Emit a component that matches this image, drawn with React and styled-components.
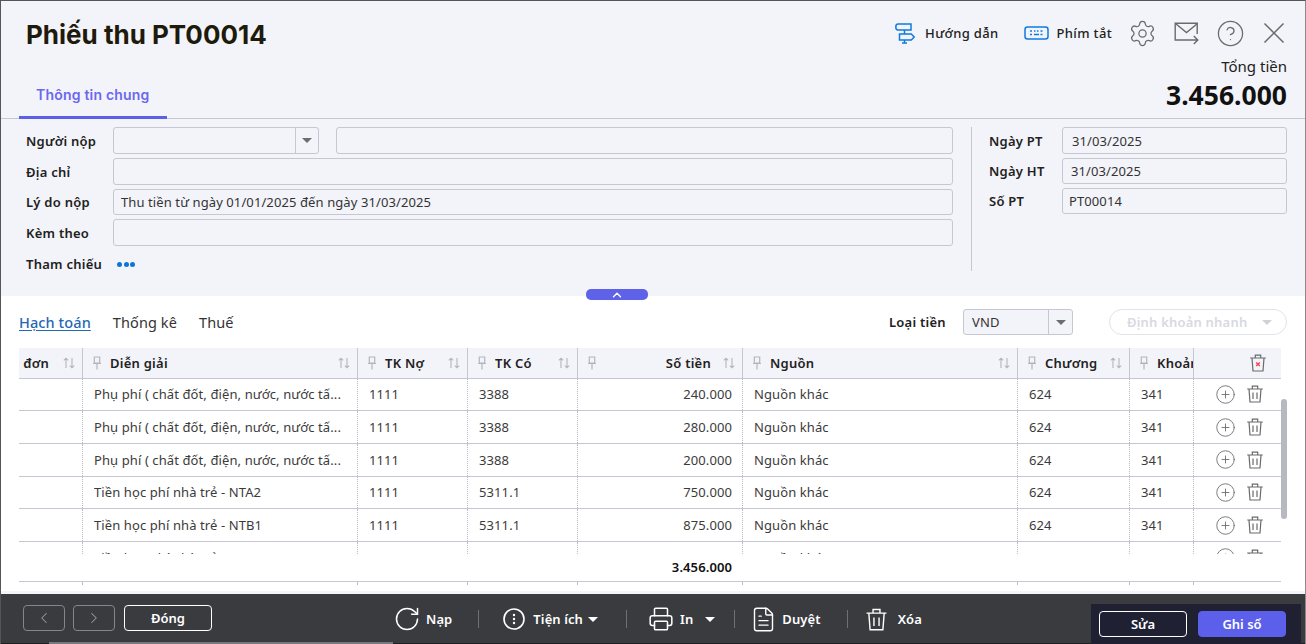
import React from 'react';
import styled, { createGlobalStyle } from 'styled-components';
import {
  ChevronLeft,
  ChevronRight,
  ChevronUp,
  CirclePlus,
  CircleHelp,
  FileText,
  Printer,
  RotateCw,
  Settings,
} from 'lucide-react';

const GlobalStyle = createGlobalStyle`
  html, body { margin: 0; padding: 0; background: #fff; }
  * { box-sizing: border-box; }
  body {
    font-family: "Noto Sans", "Liberation Sans", sans-serif;
    color: #212121;
    letter-spacing: 0.1px;
  }
`;

// main window
const Shell = styled.div`
  position: relative;
  width: 1306px;
  height: 644px;
  overflow: hidden;
  display: flex;
  flex-direction: column;
  background: #fff;
  border-top: 1px solid #555;
  border-left: 1px solid #555;
  border-right: 1px solid #8a8a8a;
`;

// top section
const Header = styled.header`
  height: 118px;
  flex: none;
  display: flex;
  justify-content: space-between;
  background: #f3f4f9;
  border-bottom: 1px solid #c6c7d0;
`;
const HeaderLeft = styled.div`
  padding-left: 18px;
  display: flex;
  flex-direction: column;
  justify-content: space-between;
`;
const Title = styled.h1`
  margin: 17px 0 0 7px;
  font-family: Inter, "Noto Sans", sans-serif;
  font-size: 26px;
  line-height: 34px;
  font-weight: 700;
  letter-spacing: 0;
  color: #1e1a0c;
`;
const MainTab = styled.div`
  width: 148px;
  height: 37px;
  margin-bottom: -1px;
  padding: 3px 0 0 17px;
  font-family: Inter, "Noto Sans", sans-serif;
  font-size: 14px;
  line-height: 20px;
  font-weight: 600;
  letter-spacing: 0.2px;
  color: #6a67f0;
  border-bottom: 3px solid #5c5fea;
`;
const HeaderRight = styled.div`
  padding: 18px 18px 0 0;
  display: flex;
  flex-direction: column;
  align-items: flex-end;
`;
const Toolbar = styled.div`
  height: 28px;
  display: flex;
  align-items: center;
  color: #6a6a6a;
`;
const ToolLink = styled.div`
  display: flex;
  align-items: center;
  gap: ${(p) => p.$gap}px;
  margin-right: ${(p) => p.$mr}px;
  font-size: 13px;
  font-weight: 500;
  letter-spacing: 0.35px;
  color: #212121;
`;
const ToolIcon = styled.div`
  display: flex;
  margin-left: ${(p) => p.$ml || 0}px;
  margin-right: ${(p) => p.$mr || 0}px;
`;
const TotalLabel = styled.div`
  margin-top: 9px;
  font-size: 15px;
  line-height: 20px;
  letter-spacing: 0;
  color: #212121;
`;
const TotalValue = styled.div`
  margin-top: 2px;
  font-size: 26.5px;
  line-height: 34px;
  font-weight: 700;
  letter-spacing: 0;
  color: #111;
`;

// form section
const FormPanel = styled.section`
  height: 177px;
  flex: none;
  display: flex;
  padding: 8px 18px 0 25px;
  background: #f3f4f9;
`;
const FormLeft = styled.div`
  width: 927px;
  display: flex;
  flex-direction: column;
  gap: 4px;
`;
const FormRight = styled.div`
  width: 316px;
  height: 144px;
  margin-left: 18px;
  padding-left: 17px;
  border-left: 1px solid #c6c7d0;
  display: flex;
  flex-direction: column;
  gap: 4px;
`;
const FormRow = styled.div`
  height: ${(p) => p.$h || 27}px;
  display: flex;
  align-items: center;
`;
const Label = styled.label`
  width: ${(p) => p.$w}px;
  flex: none;
  font-size: 13px;
  font-weight: 600;
  letter-spacing: 0.25px;
  color: #212121;
`;
const Field = styled.div`
  flex: ${(p) => (p.$w ? 'none' : 1)};
  width: ${(p) => (p.$w ? `${p.$w}px` : 'auto')};
  height: 100%;
  margin-left: ${(p) => p.$ml || 0}px;
  padding-left: ${(p) => p.$pl || 7}px;
  display: flex;
  align-items: center;
  font-size: 13px;
  color: #333;
  background: #f3f4f9;
  border: 1px solid #c6c7d0;
  border-radius: 3px;
`;
const ComboText = styled.span`
  flex: 1;
`;
const ComboArrow = styled.span`
  width: ${(p) => p.$w}px;
  height: 100%;
  flex: none;
  display: flex;
  align-items: center;
  justify-content: center;
  border-left: 1px solid #c6c7d0;
`;
const Caret = styled.span`
  width: 0;
  height: 0;
  margin-left: ${(p) => p.$ml || 0}px;
  border-left: ${(p) => p.$s}px solid transparent;
  border-right: ${(p) => p.$s}px solid transparent;
  border-top: ${(p) => p.$s}px solid ${(p) => p.$c || '#6d6d6d'};
`;
const Dots = styled.div`
  margin: 2px 0 0 4px;
  display: flex;
  gap: 1.5px;
  span {
    width: 5px;
    height: 5px;
    border-radius: 50%;
    background: #0f74d8;
  }
`;
const CollapseHandle = styled.button`
  position: absolute;
  left: 585px;
  top: 288px;
  width: 62px;
  height: 11px;
  padding: 0;
  border: 0;
  border-radius: 5px;
  background: #5d62e8;
  color: #fff;
  display: flex;
  align-items: center;
  justify-content: center;
`;

// detail section
const Detail = styled.section`
  flex: 1;
  min-height: 0;
  padding: 13px 0 0 18px;
  display: flex;
  flex-direction: column;
`;
const DetailBar = styled.div`
  height: 26px;
  padding-right: 18px;
  display: flex;
  align-items: center;
`;
const SubTab = styled.span`
  margin-right: 22px;
  font-size: 14.5px;
  font-weight: ${(p) => (p.$active ? 500 : 400)};
  color: ${(p) => (p.$active ? '#1f68b3' : '#333')};
  text-decoration: ${(p) => (p.$active ? 'underline' : 'none')};
  text-underline-offset: 2px;
`;
const CurrencyGroup = styled.div`
  margin-left: auto;
  height: 100%;
  display: flex;
  align-items: center;
`;
const QuickButton = styled.div`
  width: 178px;
  height: 100%;
  margin-left: 36px;
  padding: 0 14px 0 17px;
  display: flex;
  align-items: center;
  justify-content: space-between;
  font-size: 13px;
  font-weight: 600;
  letter-spacing: 0.2px;
  color: #d8d9df;
  border: 1px solid #e2e3e9;
  border-radius: 13px;
`;

const TableWrap = styled.div`
  width: 1262px;
  margin-top: 13px;
`;
const Grid = styled.div`
  display: grid;
  grid-template-columns: 63px 275px 110px 110px 165px 275px 112px 64px 88px;
  height: ${(p) => p.$h}px;
  border-bottom: ${(p) => (p.$flat ? 0 : 1)}px solid #c6c7d0;
`;
const HeadCell = styled.div`
  position: relative;
  min-width: 0;
  overflow: hidden;
  display: flex;
  align-items: center;
  justify-content: ${(p) => (p.$clip ? 'flex-end' : 'flex-start')};
  padding: ${(p) => (p.$clip ? '1px 33px 0 0' : '1px 0 0 9px')};
  background: #f3f4f9;
  border-left: ${(p) => (p.$first ? 0 : 1)}px solid #c6c7d0;
  font-size: 13px;
  font-weight: 600;
  letter-spacing: 0.25px;
  white-space: nowrap;
  color: #212121;
  svg {
    flex: none;
  }
`;
const HeadLabel = styled.span`
  flex: ${(p) => (p.$right ? 1 : 'none')};
  text-align: ${(p) => (p.$right ? 'right' : 'left')};
  margin-left: ${(p) => (p.$clip ? 0 : 8)}px;
  padding-right: ${(p) => (p.$right ? 31 : 0)}px;
`;
const SortMark = styled.span`
  position: absolute;
  right: 7px;
  top: 9px;
  display: flex;
  background: #f3f4f9;
`;
const DelAllMark = styled.span`
  margin-left: 46px;
  display: flex;
`;
const Scroller = styled.div`
  height: 175px;
  overflow: hidden;
`;
const Cell = styled.div`
  min-width: 0;
  display: flex;
  align-items: center;
  justify-content: ${(p) => (p.$right ? 'flex-end' : 'flex-start')};
  padding: 0 ${(p) => (p.$right ? 10 : 0)}px 0 11px;
  border-left: ${(p) => (p.$first ? 0 : 1)}px dotted #b9bac4;
  font-size: 13px;
  color: #3b3b3b;
  white-space: nowrap;
`;
const Ellipsis = styled.span`
  overflow: hidden;
  text-overflow: ellipsis;
`;
const ActionCell = styled(Cell)`
  padding-left: 21px;
  gap: 10px;
  color: #6a6a6a;
  svg {
    flex: none;
  }
`;
const SumRow = styled.div`
  height: 28px;
  padding-right: 549px;
  display: flex;
  align-items: center;
  justify-content: flex-end;
  font-size: 13px;
  font-weight: 600;
  color: #111;
  border-bottom: 1px solid #c6c7d0;
`;
const Tick = styled.div`
  border-left: ${(p) => (p.$first ? 0 : 1)}px dotted #b9bac4;
`;
const VScroll = styled.div`
  position: absolute;
  left: 1280px;
  top: 398px;
  width: 6px;
  height: 120px;
  border-radius: 3px;
  background: #b7b9c0;
`;

// footer section
const Band = styled.div`
  height: 3px;
  flex: none;
  margin-top: auto;
  background: #f3f4f9;
`;
const Footer = styled.footer`
  height: 50px;
  flex: none;
  display: flex;
  justify-content: space-between;
  margin: 0 -1px;
  background: #3a3b3f;
  border-bottom: 1px solid #1f1f22;
  color: #fff;
`;
const FooterLeft = styled.div`
  width: 392.5px;
  padding: 11px 0 0 23px;
  display: flex;
  gap: 8px;
`;
const NavButton = styled.button`
  width: 42px;
  height: 26px;
  padding: 0;
  display: flex;
  align-items: center;
  justify-content: center;
  background: transparent;
  border: 1px solid #85868b;
  border-radius: 4px;
  color: #9a9ba0;
`;
const CloseButton = styled.button`
  width: 88px;
  height: 26px;
  margin-left: 1px;
  font-family: inherit;
  font-size: 13px;
  font-weight: 600;
  color: #fff;
  background: transparent;
  border: 1px solid #fff;
  border-radius: 4px;
`;
const Actions = styled.div`
  flex: 1;
  height: 100%;
  padding-top: 1px;
  display: flex;
  align-items: center;
`;
const Action = styled.div`
  display: flex;
  align-items: center;
  gap: ${(p) => p.$gap}px;
  font-size: 13px;
  font-weight: 600;
  svg {
    flex: none;
  }
`;
const Sep = styled.span`
  width: 1px;
  height: 18px;
  margin: 0 ${(p) => p.$r}px 0 ${(p) => p.$l}px;
  background: #6f7075;
`;
const RightBlock = styled.div`
  width: 210px;
  height: 40px;
  margin: 10px 5px 0 0;
  padding: 7px 15px 0 8px;
  display: flex;
  justify-content: space-between;
  background: #1f2133;
`;
const MainButton = styled.button`
  width: 88px;
  height: 26px;
  font-family: inherit;
  font-size: 13px;
  font-weight: 600;
  color: #fff;
  background: ${(p) => (p.$primary ? '#5c5fea' : 'transparent')};
  border: 1px solid ${(p) => (p.$primary ? '#5c5fea' : '#fff')};
  border-radius: 4px;
`;
const HScroll = styled.div`
  position: absolute;
  left: 48px;
  bottom: 0;
  width: 344px;
  height: 2px;
  background: #77787d;
`;

// icons
const SignpostIcon = () => (
  <svg width="20" height="22" viewBox="0 0 20 22" fill="none" stroke="#0f7ae0" strokeWidth="1.5">
    <path d="M3 2h13v6H3C1.8 8 .8 6.7.8 5S1.8 2 3 2z" />
    <path d="M4.5 12h11.8l2.9 3-2.9 3H4.5z" />
    <path d="M9.5 8v4M9.5 18v3M7 21h5" />
  </svg>
);
const KeyboardIcon = () => (
  <svg width="25" height="14" viewBox="0 0 25 14" fill="none">
    <rect x="1" y="1" width="23" height="12" rx="2.5" stroke="#0f7ae0" strokeWidth="1.5" />
    <path d="M6 5h2M10 5h1.5M13 5h1.5M16.5 5h2M6 8.5h2M10 8.5h5M16.5 8.5h2" stroke="#0f7ae0" strokeWidth="1.5" />
  </svg>
);
const MailSendIcon = () => (
  <svg width="25" height="23" viewBox="0 0 25 23" fill="none" stroke="#6a6a6a" strokeWidth="1.4">
    <path d="M14 18H1.2V1.2h22V12" />
    <path d="M1.5 1.5l11 9 11-9" />
    <path d="M14 18h9.5M19.8 14l4 4-4 4" />
  </svg>
);
const CloseIcon = () => (
  <svg width="24" height="24" viewBox="0 0 24 24" fill="none" stroke="#6a6a6a" strokeWidth="1.5">
    <path d="M2.5 2.5l19 19M21.5 2.5l-19 19" />
  </svg>
);
const PinIcon = () => (
  <svg width="10" height="14" viewBox="0 0 10 14" fill="none" stroke="#b4b6be" strokeWidth="1.2">
    <path d="M2.3 1h5.4v6H2.3zM1 7.5h8M5 8v5.5" />
  </svg>
);
const SortIcon = () => (
  <svg width="12" height="12" viewBox="0 0 12 12" fill="none" stroke="#b4b6be" strokeWidth="1.1">
    <path d="M3 11V1.2M.8 3.4L3 1.2l2.2 2.2M9 1v9.8M6.8 8.6L9 10.8l2.2-2.2" />
  </svg>
);
const TrashIcon = ({ size = 18, color = '#6a6a6a', width = 1.2, mark }) => (
  <svg width={size} height={size} viewBox="0 0 18 18" fill="none" stroke={color} strokeWidth={width}>
    <path d="M1.2 4h15.6M6.3 4V1.2h5.4V4M3 4l1 13h10l1-13" />
    {mark ? (
      <path d="M7.2 8.5l3.6 3.6M10.8 8.5l-3.6 3.6" stroke="#f0484e" strokeWidth="1.4" />
    ) : (
      <path d="M7 7.5v6.5M11 7.5v6.5" />
    )}
  </svg>
);
const MoreIcon = () => (
  <svg width="22" height="22" viewBox="0 0 22 22" fill="none">
    <circle cx="11" cy="11" r="10" stroke="#fff" strokeWidth="1.6" />
    <circle cx="11" cy="7" r="1.2" fill="#fff" />
    <circle cx="11" cy="11" r="1.2" fill="#fff" />
    <circle cx="11" cy="15" r="1.2" fill="#fff" />
  </svg>
);

const COLS = [
  { title: 'Tên đơn', clip: true, first: true },
  { title: 'Diễn giải' },
  { title: 'TK Nợ' },
  { title: 'TK Có' },
  { title: 'Số tiền', right: true },
  { title: 'Nguồn' },
  { title: 'Chương' },
  { title: 'Khoản', noSort: true },
];

const FEE = 'Phụ phí ( chất đốt, điện, nước, nước tấ...';
const ROWS = [
  [FEE, '1111', '3388', '240.000'],
  [FEE, '1111', '3388', '280.000'],
  [FEE, '1111', '3388', '200.000'],
  ['Tiền học phí nhà trẻ - NTA2', '1111', '5311.1', '750.000'],
  ['Tiền học phí nhà trẻ - NTB1', '1111', '5311.1', '875.000'],
  ['Tiền học phí nhà trẻ - NTC', '1111', '5311.1', '611.000'],
];

export default function App() {
  return (
    <>
      <GlobalStyle />
      <Shell>
        <Header>
          <HeaderLeft>
            <Title>Phiếu thu PT00014</Title>
            <MainTab>Thông tin chung</MainTab>
          </HeaderLeft>
          <HeaderRight>
            <Toolbar>
              <ToolLink $gap={10} $mr={25}>
                <SignpostIcon />
                Hướng dẫn
              </ToolLink>
              <ToolLink $gap={8} $mr={0}>
                <KeyboardIcon />
                Phím tắt
              </ToolLink>
              <ToolIcon $ml={16}>
                <Settings size={29} strokeWidth={1.05} />
              </ToolIcon>
              <ToolIcon $ml={17}>
                <MailSendIcon />
              </ToolIcon>
              <ToolIcon $ml={17}>
                <CircleHelp size={29} strokeWidth={1.05} />
              </ToolIcon>
              <ToolIcon $ml={17} $mr={1}>
                <CloseIcon />
              </ToolIcon>
            </Toolbar>
            <TotalLabel>Tổng tiền</TotalLabel>
            <TotalValue>3.456.000</TotalValue>
          </HeaderRight>
        </Header>

        <FormPanel>
          <FormLeft>
            <FormRow>
              <Label $w={87}>Người nộp</Label>
              <Field $w={206}>
                <ComboText />
                <ComboArrow $w={23}>
                  <Caret $s={5} />
                </ComboArrow>
              </Field>
              <Field $ml={17} />
            </FormRow>
            <FormRow>
              <Label $w={87}>Địa chỉ</Label>
              <Field />
            </FormRow>
            <FormRow $h={26}>
              <Label $w={87}>Lý do nộp</Label>
              <Field>Thu tiền từ ngày 01/01/2025 đến ngày 31/03/2025</Field>
            </FormRow>
            <FormRow>
              <Label $w={87}>Kèm theo</Label>
              <Field />
            </FormRow>
            <FormRow>
              <Label $w={87}>Tham chiếu</Label>
              <Dots>
                <span />
                <span />
                <span />
              </Dots>
            </FormRow>
          </FormLeft>
          <FormRight>
            <FormRow>
              <Label $w={73}>Ngày PT</Label>
              <Field $pl={9}>31/03/2025</Field>
            </FormRow>
            <FormRow $h={26}>
              <Label $w={73}>Ngày HT</Label>
              <Field $pl={8}>31/03/2025</Field>
            </FormRow>
            <FormRow $h={26}>
              <Label $w={73}>Số PT</Label>
              <Field $pl={6}>PT00014</Field>
            </FormRow>
          </FormRight>
        </FormPanel>

        <CollapseHandle>
          <ChevronUp size={14} strokeWidth={2.4} />
        </CollapseHandle>

        <Detail>
          <DetailBar>
            <SubTab $active>Hạch toán</SubTab>
            <SubTab>Thống kê</SubTab>
            <SubTab>Thuế</SubTab>
            <CurrencyGroup>
              <Label $w={74}>Loại tiền</Label>
              <Field $w={110} $pl={8}>
                <ComboText>VND</ComboText>
                <ComboArrow $w={24}>
                  <Caret $s={5} />
                </ComboArrow>
              </Field>
              <QuickButton>
                Định khoản nhanh
                <Caret $s={5} $c="#d0d1d7" />
              </QuickButton>
            </CurrencyGroup>
          </DetailBar>

          <TableWrap>
            <Grid $h={30.5}>
              {COLS.map((c) => (
                <HeadCell key={c.title} $clip={c.clip} $first={c.first}>
                  {!c.clip && <PinIcon />}
                  <HeadLabel $right={c.right} $clip={c.clip}>
                    {c.title}
                  </HeadLabel>
                  {!c.noSort && (
                    <SortMark>
                      <SortIcon />
                    </SortMark>
                  )}
                </HeadCell>
              ))}
              <HeadCell>
                <DelAllMark>
                  <TrashIcon size={18} mark />
                </DelAllMark>
              </HeadCell>
            </Grid>
            <Scroller>
              {ROWS.map((r, i) => (
                <Grid $h={32.7} key={i}>
                  <Cell $first />
                  <Cell>
                    <Ellipsis>{r[0]}</Ellipsis>
                  </Cell>
                  <Cell>{r[1]}</Cell>
                  <Cell>{r[2]}</Cell>
                  <Cell $right>{r[3]}</Cell>
                  <Cell>Nguồn khác</Cell>
                  <Cell>624</Cell>
                  <Cell>341</Cell>
                  <ActionCell>
                    <CirclePlus size={21} strokeWidth={1} />
                    <TrashIcon />
                  </ActionCell>
                </Grid>
              ))}
            </Scroller>
            <SumRow>3.456.000</SumRow>
            <Grid $h={2} $flat>
              {[...COLS, {}].map((c, i) => (
                <Tick key={i} $first={c.first} />
              ))}
            </Grid>
          </TableWrap>
        </Detail>
        <VScroll />

        <Band />
        <Footer>
          <FooterLeft>
            <NavButton>
              <ChevronLeft size={18} strokeWidth={1.4} />
            </NavButton>
            <NavButton>
              <ChevronRight size={18} strokeWidth={1.4} />
            </NavButton>
            <CloseButton>Đóng</CloseButton>
          </FooterLeft>
          <Actions>
            <Action $gap={5.5}>
              <RotateCw size={28} strokeWidth={1.3} />
              Nạp
            </Action>
            <Sep $l={26} $r={24} />
            <Action $gap={8}>
              <MoreIcon />
              Tiện ích
              <Caret $s={5} $c="#fff" $ml={-3} />
            </Action>
            <Sep $l={28} $r={21} />
            <Action $gap={6}>
              <Printer size={26} strokeWidth={1.4} />
              In
              <Caret $s={5} $c="#fff" $ml={6} />
            </Action>
            <Sep $l={19} $r={14.5} />
            <Action $gap={5.5}>
              <FileText size={27} strokeWidth={1.25} />
              Duyệt
            </Action>
            <Sep $l={26} $r={17.5} />
            <Action $gap={9.5}>
              <TrashIcon size={23} color="#fff" width={1.1} />
              Xóa
            </Action>
          </Actions>
          <RightBlock>
            <MainButton>Sửa</MainButton>
            <MainButton $primary>Ghi sổ</MainButton>
          </RightBlock>
        </Footer>
        <HScroll />
      </Shell>
    </>
  );
}
